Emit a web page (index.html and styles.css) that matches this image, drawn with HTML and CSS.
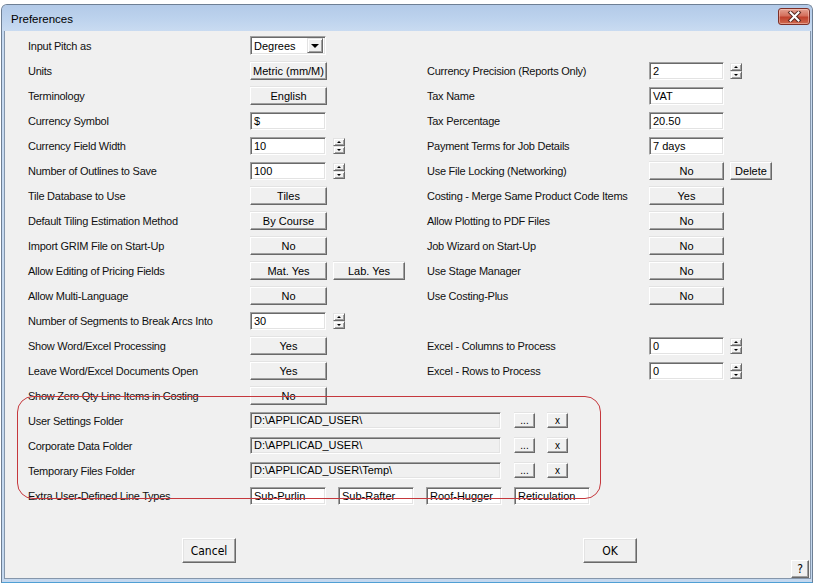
FILE: index.html
```html
<!DOCTYPE html>
<html>
<head>
<meta charset="utf-8">
<title>Preferences</title>
<link rel="stylesheet" href="styles.css">
</head>
<body>
<div class="window">
  <div class="titlebar">
    <span class="title">Preferences</span>
    <div class="close">
      <svg width="15" height="11" viewBox="0 0 15 11">
        <path d="M3.5 1.5 L11.5 9.5 M11.5 1.5 L3.5 9.5" stroke="#5a2a22" stroke-width="4" stroke-linecap="square"/>
        <path d="M3.5 1.5 L11.5 9.5 M11.5 1.5 L3.5 9.5" stroke="#ffffff" stroke-width="2" stroke-linecap="square"/>
      </svg>
    </div>
  </div>
  <div class="client">
    <div class="form">
      <div class="lbl">Input Pitch as</div>
      <div class="ctl">
        <div class="combo"><span class="combo-text">Degrees</span><span class="combo-btn"><span class="tri-down"></span></span></div>
      </div>
      <div class="lbl"></div>
      <div class="ctl"></div>

      <div class="lbl">Units</div>
      <div class="ctl"><div class="btn w77">Metric (mm/M)</div></div>
      <div class="lbl">Currency Precision (Reports Only)</div>
      <div class="ctl"><div class="field w75">2</div><div class="spin r"><span class="sb"><span class="tu"></span></span><span class="sb"><span class="td"></span></span></div></div>

      <div class="lbl">Terminology</div>
      <div class="ctl"><div class="btn w77">English</div></div>
      <div class="lbl">Tax Name</div>
      <div class="ctl"><div class="field w75">VAT</div></div>

      <div class="lbl">Currency Symbol</div>
      <div class="ctl"><div class="field w76">$</div></div>
      <div class="lbl">Tax Percentage</div>
      <div class="ctl"><div class="field w75">20.50</div></div>

      <div class="lbl">Currency Field Width</div>
      <div class="ctl"><div class="field w76">10</div><div class="spin"><span class="sb"><span class="tu"></span></span><span class="sb"><span class="td"></span></span></div></div>
      <div class="lbl">Payment Terms for Job Details</div>
      <div class="ctl"><div class="field w75">7 days</div></div>

      <div class="lbl">Number of Outlines to Save</div>
      <div class="ctl"><div class="field w76">100</div><div class="spin"><span class="sb"><span class="tu"></span></span><span class="sb"><span class="td"></span></span></div></div>
      <div class="lbl">Use File Locking (Networking)</div>
      <div class="ctl"><div class="btn w75">No</div><div class="btn w42 ml6">Delete</div></div>

      <div class="lbl">Tile Database to Use</div>
      <div class="ctl"><div class="btn w77">Tiles</div></div>
      <div class="lbl">Costing - Merge Same Product Code Items</div>
      <div class="ctl"><div class="btn w75">Yes</div></div>

      <div class="lbl">Default Tiling Estimation Method</div>
      <div class="ctl"><div class="btn w77">By Course</div></div>
      <div class="lbl">Allow Plotting to PDF Files</div>
      <div class="ctl"><div class="btn w75">No</div></div>

      <div class="lbl">Import GRIM File on Start-Up</div>
      <div class="ctl"><div class="btn w77">No</div></div>
      <div class="lbl">Job Wizard on Start-Up</div>
      <div class="ctl"><div class="btn w75">No</div></div>

      <div class="lbl">Allow Editing of Pricing Fields</div>
      <div class="ctl"><div class="btn w77">Mat. Yes</div><div class="btn w72 ml6">Lab. Yes</div></div>
      <div class="lbl">Use Stage Manager</div>
      <div class="ctl"><div class="btn w75">No</div></div>

      <div class="lbl">Allow Multi-Language</div>
      <div class="ctl"><div class="btn w77">No</div></div>
      <div class="lbl">Use Costing-Plus</div>
      <div class="ctl"><div class="btn w75">No</div></div>

      <div class="lbl">Number of Segments to Break Arcs Into</div>
      <div class="ctl"><div class="field w76">30</div><div class="spin"><span class="sb"><span class="tu"></span></span><span class="sb"><span class="td"></span></span></div></div>
      <div class="lbl"></div>
      <div class="ctl"></div>

      <div class="lbl">Show Word/Excel Processing</div>
      <div class="ctl"><div class="btn w77">Yes</div></div>
      <div class="lbl">Excel - Columns to Process</div>
      <div class="ctl"><div class="field w75">0</div><div class="spin r"><span class="sb"><span class="tu"></span></span><span class="sb"><span class="td"></span></span></div></div>

      <div class="lbl">Leave Word/Excel Documents Open</div>
      <div class="ctl"><div class="btn w77">Yes</div></div>
      <div class="lbl">Excel - Rows to Process</div>
      <div class="ctl"><div class="field w75">0</div><div class="spin r"><span class="sb"><span class="tu"></span></span><span class="sb"><span class="td"></span></span></div></div>

      <div class="lbl">Show Zero Qty Line Items in Costing</div>
      <div class="ctl"><div class="btn w77">No</div></div>
      <div class="lbl"></div>
      <div class="ctl"></div>

      <div class="lbl">User Settings Folder</div>
      <div class="ctl wide"><div class="field ro w251">D:\APPLICAD_USER\</div><div class="btn small ml13">...</div><div class="btn small ml12">x</div></div>

      <div class="lbl">Corporate Data Folder</div>
      <div class="ctl wide"><div class="field ro w251">D:\APPLICAD_USER\</div><div class="btn small ml13">...</div><div class="btn small ml12">x</div></div>

      <div class="lbl">Temporary Files Folder</div>
      <div class="ctl wide"><div class="field ro w251">D:\APPLICAD_USER\Temp\</div><div class="btn small ml13">...</div><div class="btn small ml12">x</div></div>

      <div class="lbl">Extra User-Defined Line Types</div>
      <div class="ctl wide types"><div class="field w76">Sub-Purlin</div><div class="field w76">Sub-Rafter</div><div class="field w76">Roof-Hugger</div><div class="field w76">Reticulation</div></div>
    </div>
    <div class="footer">
      <div class="bigbtn cancel">Cancel</div>
      <div class="bigbtn ok">OK</div>
      <div class="help">?</div>
    </div>
    <div class="highlight"></div>
  </div>
</div>
</body>
</html>
```

FILE: styles.css
```css
html, body {
  margin: 0;
  padding: 0;
  background: #ffffff;
}

body {
  font-family: "Liberation Sans", Arial, sans-serif;
  font-size: 11px;
  color: #000;
}

.window {
  box-sizing: border-box;
  width: 812px;
  height: 579px;
  margin: 4px 0 0 1px;
  border: 1px solid #6e7f94;
  border-bottom-color: #4f9fd4;
  border-radius: 6px 6px 0 0;
  background: linear-gradient(#bcd1ec, #c7daf1 40px, #c4d8ef);
  display: flex;
  flex-direction: column;
}

.titlebar {
  height: 26px;
  display: flex;
  align-items: center;
  justify-content: space-between;
  padding: 0 2px 0 9px;
  border-radius: 5px 5px 0 0;
  background: linear-gradient(#b3cae8, #bcd2ed 50%, #c9dbf1);
}

.title {
  font-size: 11.5px;
  color: #000;
  margin-top: 1px;
}

.close {
  box-sizing: border-box;
  width: 32px;
  height: 17px;
  margin-top: -3px;
  border: 1px solid #7d2f27;
  border-radius: 3px;
  background: linear-gradient(#e4a191, #d46f5c 45%, #c0412d 55%, #cf6a4f);
  display: flex;
  align-items: center;
  justify-content: center;
  box-shadow: inset 0 0 0 1px rgba(255, 220, 210, 0.45);
}

.client {
  position: relative;
  box-sizing: border-box;
  height: 548px;
  margin: 0 1px 0 2px;
  background: #f0f0f0;
  border: 1px solid #8596ab;
  border-top: none;
  display: flex;
  flex-direction: column;
}

.form {
  display: grid;
  grid-template-columns: 222px 177px 222px 1fr;
  grid-auto-rows: 25px;
  padding: 2px 0 0 23px;
}

.lbl {
  display: flex;
  align-items: center;
  white-space: nowrap;
  letter-spacing: -0.25px;
  color: #111;
}

.ctl {
  display: flex;
  align-items: center;
}

.ctl.wide {
  grid-column: 2 / 5;
}

.types {
  gap: 12px;
}

.field {
  box-sizing: border-box;
  height: 18px;
  background: #fff;
  border: 1px solid;
  border-color: #a0a0a0 #ffffff #ffffff #a0a0a0;
  box-shadow: inset 1px 1px 0 #6a6a6a, inset -1px -1px 0 #e3e3e3;
  padding: 0 3px;
  line-height: 16px;
  white-space: nowrap;
  overflow: hidden;
}

.field.ro {
  background: #f0f0f0;
  height: 17px;
  line-height: 15px;
}

.w75 { width: 75px; }
.w76 { width: 76px; }
.w77 { width: 77px; }
.w72 { width: 72px; }
.w42 { width: 42px; }
.w251 { width: 251px; }
.ml6 { margin-left: 6px; }
.ml12 { margin-left: 12px; }
.ml13 { margin-left: 13px; }

.btn {
  box-sizing: border-box;
  height: 18px;
  background: #f0f0f0;
  border: 1px solid;
  border-color: #ffffff #696969 #696969 #ffffff;
  box-shadow: inset -1px -1px 0 #a0a0a0, 0 -1px 0 #e3e3e3;
  display: flex;
  align-items: center;
  justify-content: center;
  white-space: nowrap;
}

.btn.small {
  width: 21px;
  height: 15px;
  font-size: 10px;
  padding-bottom: 1px;
}

.combo {
  box-sizing: border-box;
  width: 76px;
  height: 19px;
  background: #fff;
  border: 1px solid;
  border-color: #a0a0a0 #ffffff #ffffff #a0a0a0;
  box-shadow: inset 1px 1px 0 #6a6a6a, inset -1px -1px 0 #e3e3e3;
  display: flex;
  align-items: center;
  justify-content: space-between;
  padding: 0 2px 0 3px;
}

.combo-text {
  line-height: 15px;
  margin-top: 1px;
}

.combo-btn {
  box-sizing: border-box;
  width: 16px;
  height: 15px;
  background: #f0f0f0;
  border: 1px solid;
  border-color: #e3e3e3 #696969 #696969 #e3e3e3;
  box-shadow: inset 1px 1px 0 #fff, inset -1px -1px 0 #a0a0a0;
  display: flex;
  align-items: center;
  justify-content: center;
}

.tri-down {
  width: 0;
  height: 0;
  border-left: 4px solid transparent;
  border-right: 4px solid transparent;
  border-top: 4px solid #000;
  margin-top: 1px;
}

.spin {
  display: flex;
  flex-direction: column;
  margin-left: 7px;
  width: 12px;
}

.spin.r {
  margin-left: 6px;
}

.sb {
  box-sizing: border-box;
  width: 12px;
  height: 8px;
  background: #f0f0f0;
  border: 1px solid;
  border-color: #e3e3e3 #696969 #696969 #e3e3e3;
  box-shadow: inset 1px 1px 0 #fff, inset -1px -1px 0 #a0a0a0;
  display: flex;
  align-items: center;
  justify-content: center;
}

.tu {
  width: 0;
  height: 0;
  border-left: 2px solid transparent;
  border-right: 2px solid transparent;
  border-bottom: 2px solid #000;
}

.td {
  width: 0;
  height: 0;
  border-left: 2px solid transparent;
  border-right: 2px solid transparent;
  border-top: 2px solid #000;
}

.footer {
  flex: 1;
  display: flex;
  align-items: flex-start;
}

.bigbtn {
  box-sizing: border-box;
  width: 54px;
  height: 25px;
  margin-top: 30px;
  background: #f0f0f0;
  border: 1px solid;
  border-color: #ffffff #696969 #696969 #ffffff;
  box-shadow: inset -1px -1px 0 #a0a0a0, inset 1px 1px 0 #e3e3e3;
  display: flex;
  align-items: center;
  justify-content: center;
  font-family: "DejaVu Sans Condensed", "DejaVu Sans", "Liberation Sans", sans-serif;
  font-stretch: condensed;
  font-size: 12px;
}

.cancel {
  margin-left: 177px;
}

.ok {
  margin-left: 347px;
}

.help {
  box-sizing: border-box;
  width: 18px;
  height: 18px;
  margin-top: 52px;
  margin-left: auto;
  margin-right: 1px;
  background: #f0f0f0;
  border: 1px solid;
  border-color: #ffffff #696969 #696969 #ffffff;
  box-shadow: inset -1px -1px 0 #a0a0a0;
  display: flex;
  align-items: center;
  justify-content: center;
  font-family: "DejaVu Sans Condensed", "DejaVu Sans", "Liberation Sans", sans-serif;
  font-stretch: condensed;
  font-size: 12px;
}

.highlight {
  position: absolute;
  left: 12px;
  top: 365px;
  width: 584px;
  height: 103px;
  box-sizing: border-box;
  border: 1px solid #c5383d;
  border-radius: 16px;
  pointer-events: none;
}
```
